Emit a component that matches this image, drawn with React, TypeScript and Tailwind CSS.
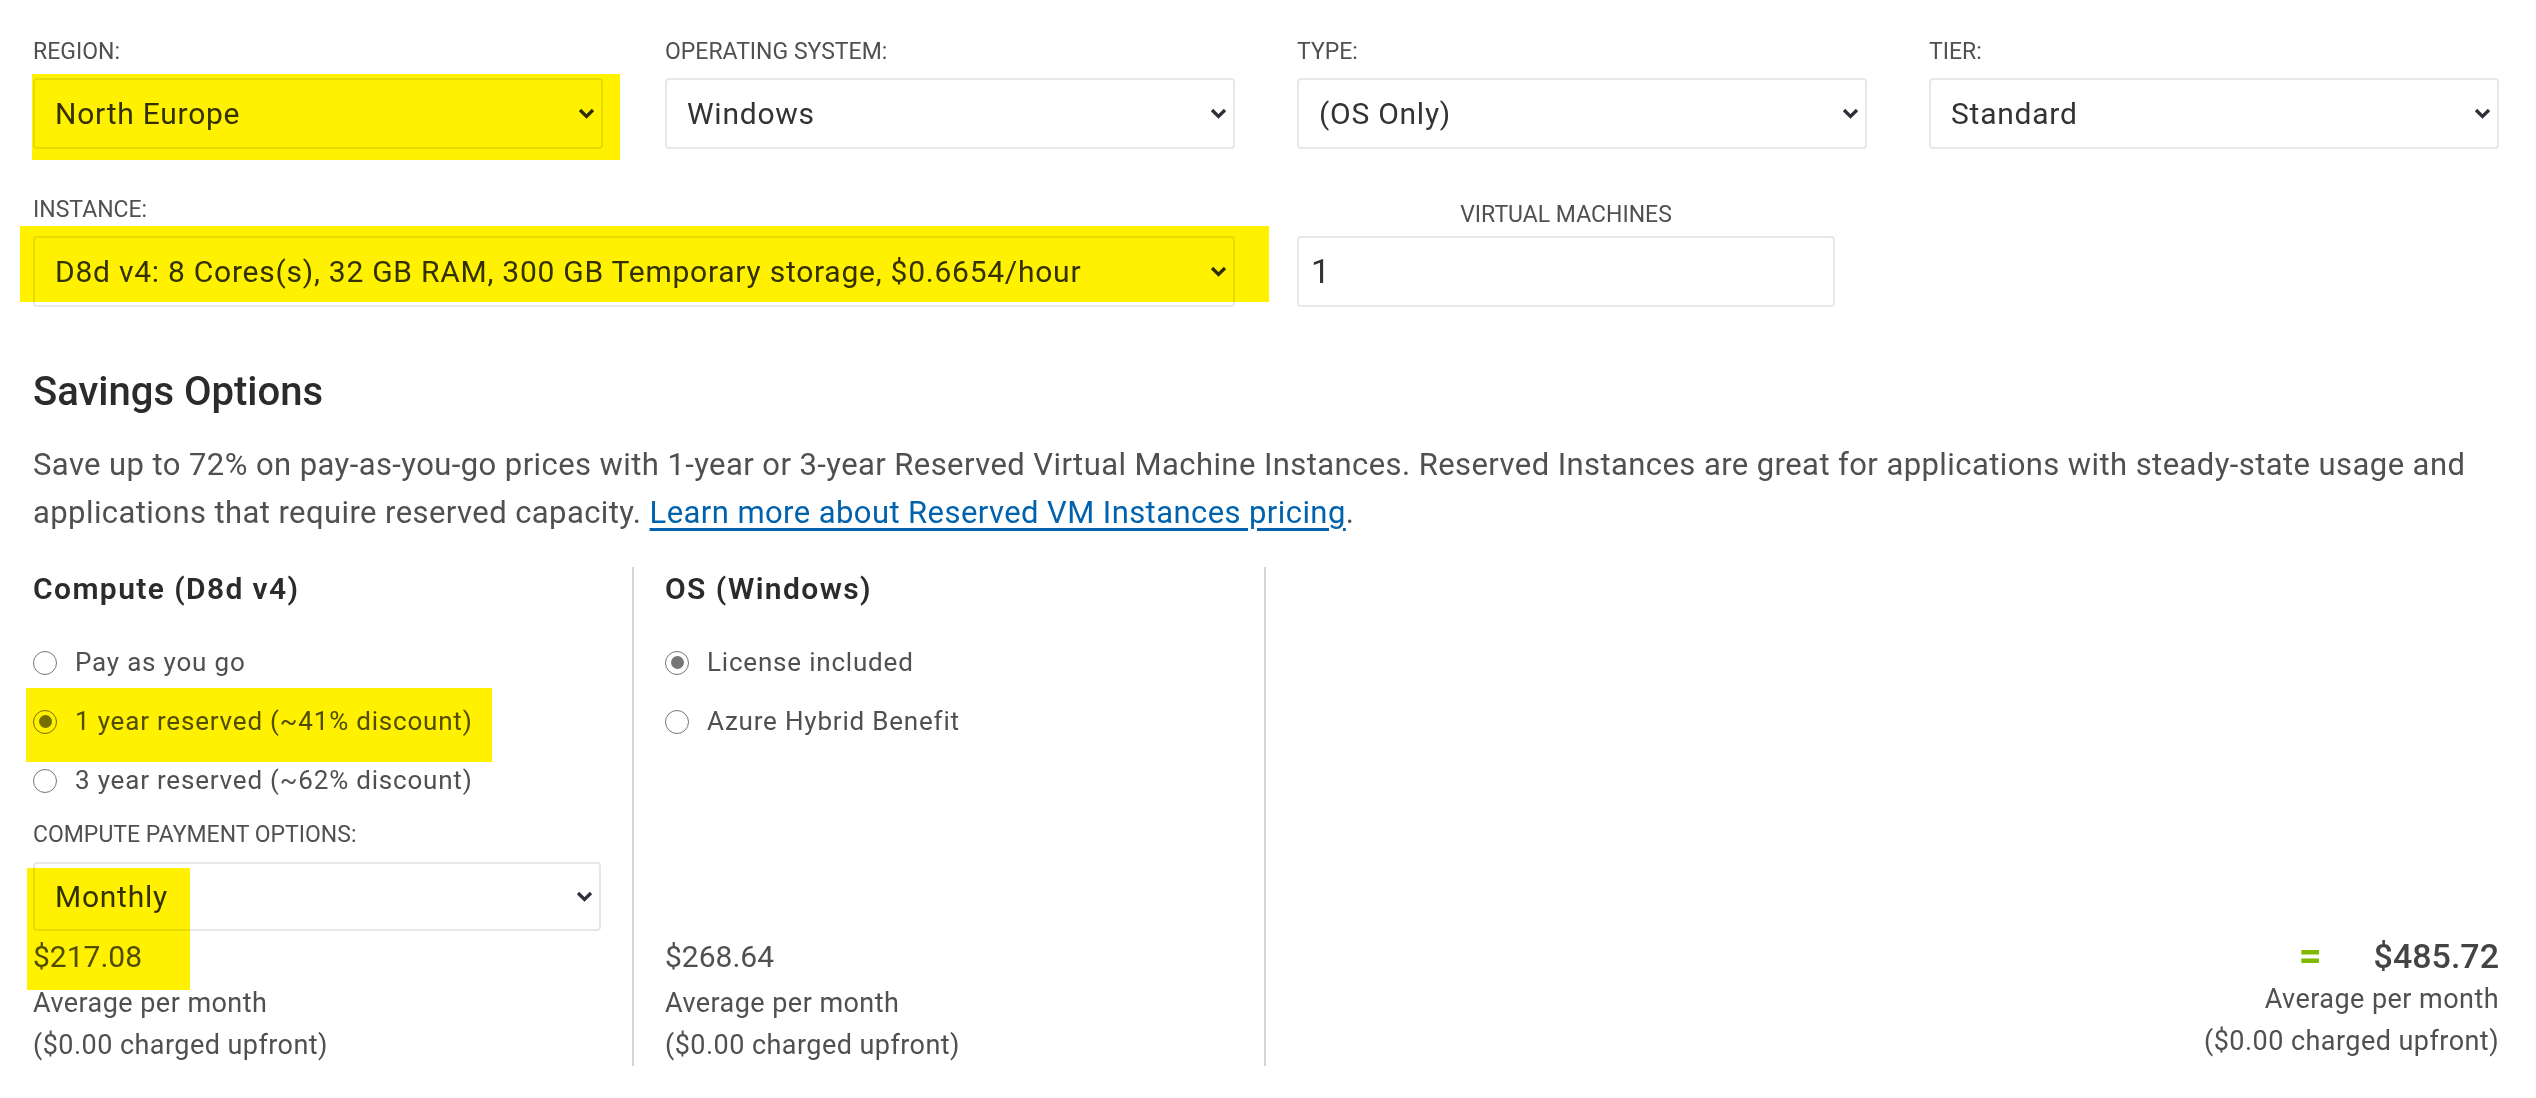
import React from 'react';

const Chevron = () => (
  <svg width="17" height="11" viewBox="0 0 17 11" className="shrink-0">
    <polyline points="2,2 8.5,8.5 15,2" fill="none" stroke="#2f2f3a" strokeWidth="3.2" />
  </svg>
);

const Select = ({ value }: { value: string }) => (
  <div className="h-[71px] border-2 border-[#e8e8e8] rounded-[4px] flex items-center justify-between pl-[20px] pr-[6px] text-[30px] tracking-[0.75px] text-[#333]">
    <span className="whitespace-nowrap">{value}</span>
    <Chevron />
  </div>
);

const Label = ({ children, className = '' }: { children: React.ReactNode; className?: string }) => (
  <div className={`text-[23px] leading-[36px] uppercase text-[#505050] ${className}`}>{children}</div>
);

const Radio = ({ label, checked }: { label: string; checked?: boolean }) => (
  <div className="h-[59px] flex items-center gap-[18px] text-[26px] tracking-[0.8px] text-[#505050]">
    <span className="w-[24px] h-[24px] rounded-full border-[1.5px] border-[#767676] flex items-center justify-center shrink-0">
      {checked && <span className="w-[13px] h-[13px] rounded-full bg-[#767676]" />}
    </span>
    <span>{label}</span>
  </div>
);

const Sub = ({ children }: { children: React.ReactNode }) => (
  <div className="text-[27px] leading-[42px] tracking-[0.45px] text-[#505050]">{children}</div>
);

const Price = ({ amount }: { amount: string }) => (
  <div className="mt-auto">
    <div className="text-[30px] leading-[40px] text-[#505050]">{amount}</div>
    <div className="mt-[5px]">
      <Sub>Average per month</Sub>
      <Sub>($0.00 charged upfront)</Sub>
    </div>
  </div>
);

const Mark = ({ className }: { className: string }) => (
  <div className={`absolute bg-[#fff100] mix-blend-multiply pointer-events-none ${className}`} />
);

export default function App() {
  return (
    <div className="relative w-[2536px] h-[1098px] bg-white pl-[2px] pr-[6px] pt-[34px] font-['Roboto',sans-serif] text-[#505050]">
      {/* Top selectors */}
      <div className="flex">
        <div className="w-1/4 px-[31px]">
          <Label className="mb-[8px]">Region:</Label>
          <Select value="North Europe" />
        </div>
        <div className="w-1/4 px-[31px]">
          <Label className="mb-[8px]">Operating System:</Label>
          <Select value="Windows" />
        </div>
        <div className="w-1/4 px-[31px]">
          <Label className="mb-[8px]">Type:</Label>
          <Select value="(OS Only)" />
        </div>
        <div className="w-1/4 px-[31px]">
          <Label className="mb-[8px]">Tier:</Label>
          <Select value="Standard" />
        </div>
      </div>

      <div className="flex mt-[43px]">
        <div className="w-1/2 px-[31px]">
          <Label className="mb-[8px]">Instance:</Label>
          <Select value="D8d v4: 8 Cores(s), 32 GB RAM, 300 GB Temporary storage, $0.6654/hour" />
        </div>
        <div className="w-1/4 px-[31px]">
          <div className="w-[538px]">
            <Label className="mb-[8px] text-center text-[#777] translate-y-[5px]">Virtual Machines</Label>
            <div className="h-[71px] border-2 border-[#e8e8e8] rounded-[4px] flex items-center pl-[12px] text-[34px] text-[#333]">
              1
            </div>
          </div>
        </div>
      </div>

      {/* Savings options */}
      <div className="px-[31px]">
        <h2 className="mt-[61px] text-[40px] leading-[48px] font-medium text-[#2b2b2b]">Savings Options</h2>
        <p className="mt-[25px] text-[31px] leading-[48px] tracking-[0.42px] text-[#505050]">
          Save up to 72% on pay-as-you-go prices with 1-year or 3-year Reserved Virtual Machine Instances. Reserved
          Instances are great for applications with steady-state usage and applications that require reserved capacity.{' '}
          <a className="text-[#0062ad] underline underline-offset-[5px]">Learn more about Reserved VM Instances pricing</a>.
        </p>
      </div>

      <div className="flex mt-[30px] h-[499px]">
        <div className="w-1/4 px-[31px] border-r-2 border-[#d4d4d4] flex flex-col">
          <h3 className="text-[30px] leading-[40px] font-semibold tracking-[1.4px] text-[#2b2b2b] mt-[2px]">Compute (D8d v4)</h3>
          <div className="mt-[24px]">
            <Radio label="Pay as you go" />
            <Radio label="1 year reserved (~41% discount)" checked />
            <Radio label="3 year reserved (~62% discount)" />
          </div>
          <Label className="mt-[7px] mb-[9px]">Compute payment options:</Label>
          <Select value="Monthly" />
          <div className="mt-[6px]">
            <div className="text-[30px] leading-[40px] text-[#505050]">$217.08</div>
            <div className="mt-[5px]">
              <Sub>Average per month</Sub>
              <Sub>($0.00 charged upfront)</Sub>
            </div>
          </div>
        </div>
        <div className="w-1/4 px-[31px] border-r-2 border-[#d4d4d4] flex flex-col">
          <h3 className="text-[30px] leading-[40px] font-semibold tracking-[1.4px] text-[#2b2b2b] mt-[2px]">OS (Windows)</h3>
          <div className="mt-[24px]">
            <Radio label="License included" checked />
            <Radio label="Azure Hybrid Benefit" />
          </div>
          <Price amount="$268.64" />
        </div>
        <div className="w-1/2 px-[31px] flex flex-col items-end justify-end pb-[4px]">
          <div className="flex items-center gap-[52px]">
            <span className="text-[40px] leading-[40px] font-bold text-[#7fba00]">=</span>
            <span className="text-[34px] leading-[44px] font-medium text-[#444]">$485.72</span>
          </div>
          <Sub>Average per month</Sub>
          <Sub>($0.00 charged upfront)</Sub>
        </div>
      </div>

      {/* highlighter marks */}
      <Mark className="left-[32px] top-[74px] w-[588px] h-[86px]" />
      <Mark className="left-[20px] top-[226px] w-[1249px] h-[76px]" />
      <Mark className="left-[26px] top-[688px] w-[466px] h-[74px]" />
      <Mark className="left-[27px] top-[868px] w-[163px] h-[122px]" />
    </div>
  );
}
